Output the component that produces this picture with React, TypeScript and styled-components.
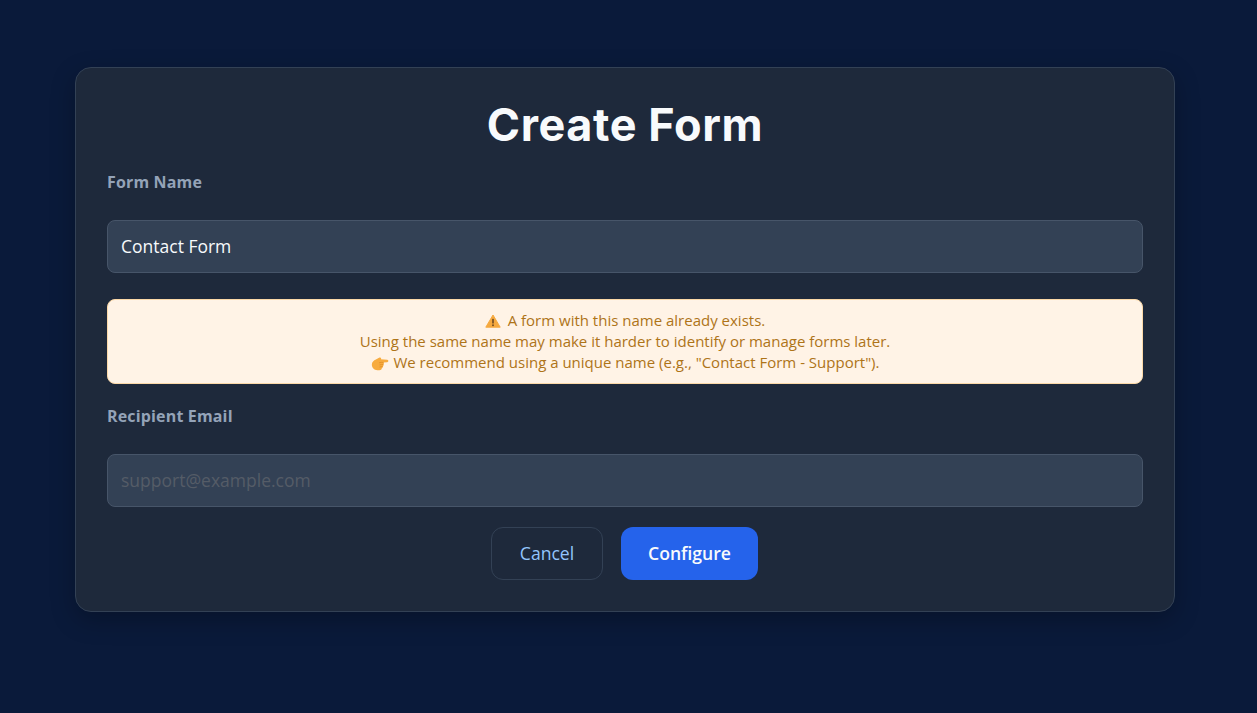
import React from 'react';

import styled, { createGlobalStyle } from 'styled-components';

const GlobalStyle = createGlobalStyle`
    html, body {
        margin: 0;
        height: 100%;
        background: #0a1a3a;
    }
    * {
        box-sizing: border-box;
    }
`;

const WarningIcon = () => (
    <EmojiSvg viewBox='0 0 16 16' width={16} height={16}>
        <path d='M8 2 L15.2 14.2 H0.8 Z' fill='#f5a93f' stroke='#f5a93f' strokeLinejoin='round' />
        <rect x='7.2' y='5.8' width='1.6' height='4.8' rx='0.6' fill='#6e4a22' />
        <circle cx='8' cy='12.2' r='0.95' fill='#6e4a22' />
    </EmojiSvg>
);

const PointingIcon = () => (
    <HandSvg viewBox='0 0 17 16' width={18} height={17}>
        <path
            d='M0.8 9 C0.8 6.6 2.6 5 4.6 4.2 L8 2.4 C9.2 1.9 10 3 9.4 4 L15.4 4.5 C16.8 4.7 16.7 6.7 15.3 6.8 L11.8 7 C12.4 7.6 12.3 8.6 11.7 9 C12 9.7 11.7 10.6 11.1 10.9 C11.2 11.6 10.8 12.4 10.2 12.6 C10.2 13.8 9.2 14.4 8 14.4 L6 14.4 C3 14.4 0.8 12 0.8 9 Z'
            fill='#f7ab3e'
        />
        <path d='M7.6 7.4 C8.8 6.9 10.4 6.8 11.8 7' fill='none' stroke='#e08c24' strokeWidth='0.7' />
        <path d='M8 9.4 C9.2 9 10.4 8.9 11.7 9' fill='none' stroke='#e08c24' strokeWidth='0.7' />
        <path d='M8 11.4 C9 11 10 10.9 11.1 10.9' fill='none' stroke='#e08c24' strokeWidth='0.7' />
    </HandSvg>
);

const App = () => {
    return (
        <Page>
            <GlobalStyle />
            <Card>
                <Title>Create Form</Title>
                <Label>Form Name</Label>
                <Input type='text' defaultValue='Contact Form' />
                <Notice>
                    <NoticeLine>
                        <WarningIcon /> A form with this name already exists.
                    </NoticeLine>
                    <NoticeLine>
                        Using the same name may make it harder to identify or manage forms later.
                    </NoticeLine>
                    <NoticeLine>
                        <PointingIcon /> We recommend using a unique name (e.g., "Contact Form - Support").
                    </NoticeLine>
                </Notice>
                <Label>Recipient Email</Label>
                <Input type='email' placeholder='support@example.com' />
                <Actions>
                    <CancelButton type='button'>Cancel</CancelButton>
                    <ConfigureButton type='button'>Configure</ConfigureButton>
                </Actions>
            </Card>
        </Page>
    );
};

export default App;

const Page = styled.div`
    min-height: 713px;
    padding: 67px 82px 101px 75px;
    background: #0a1a3a;
    font-family: 'Open Sans', sans-serif;
`;
const Card = styled.div`
    width: 1100px;
    height: 545px;
    padding: 32px 31px;
    background: #1e293b;
    border: 1px solid #334155;
    border-radius: 16px;
    box-shadow: 0 8px 24px rgba(0, 0, 0, 0.25);
`;
const Title = styled.h1`
    margin: 0 0 15px;
    height: 50px;
    line-height: 50px;
    text-align: center;
    font-family: 'Inter', sans-serif;
    font-size: 45px;
    font-weight: 700;
    letter-spacing: 0.6px;
    color: #f8fafc;
`;
const Label = styled.label`
    display: block;
    height: 55px;
    padding-top: 5px;
    line-height: 24px;
    font-size: 16px;
    font-weight: 700;
    letter-spacing: 0.16px;
    color: #94a3b8;
`;
const Input = styled.input`
    display: block;
    width: 100%;
    height: 53px;
    padding: 0 13px 2px;
    background: #334155;
    border: 1px solid #475569;
    border-radius: 8px;
    outline: none;
    font-family: 'Open Sans', sans-serif;
    font-size: 17.5px;
    color: #f8fafc;
    &::placeholder {
        color: #555c67;
        opacity: 1;
    }
`;
const Notice = styled.div`
    height: 85px;
    margin: 26px 0 15px;
    padding: 10px 16px;
    background: #fff3e6;
    border: 1px solid #fcd9a8;
    border-radius: 8px;
    text-align: center;
    font-size: 15px;
    line-height: 21px;
    color: #ae7418;
`;
const NoticeLine = styled.div`
    white-space: nowrap;
`;
const EmojiSvg = styled.svg`
    display: inline-block;
    vertical-align: -3px;
    margin-right: 3px;
`;
const HandSvg = styled(EmojiSvg)`
    vertical-align: -4px;
    margin-right: 1px;
`;
const Actions = styled.div`
    display: flex;
    justify-content: center;
    gap: 18px;
    margin-top: 20px;
    padding-right: 1px;
`;
const BaseButton = styled.button`
    height: 53px;
    padding: 0 0 2px;
    border-radius: 12px;
    font-family: 'Open Sans', sans-serif;
    font-size: 17.6px;
`;
const CancelButton = styled(BaseButton)`
    width: 112px;
    background: transparent;
    border: 1px solid #334155;
    font-weight: 500;
    color: #93c5fd;
`;
const ConfigureButton = styled(BaseButton)`
    width: 137px;
    background: #2563eb;
    border: none;
    font-weight: 600;
    color: #f8fafc;
`;
